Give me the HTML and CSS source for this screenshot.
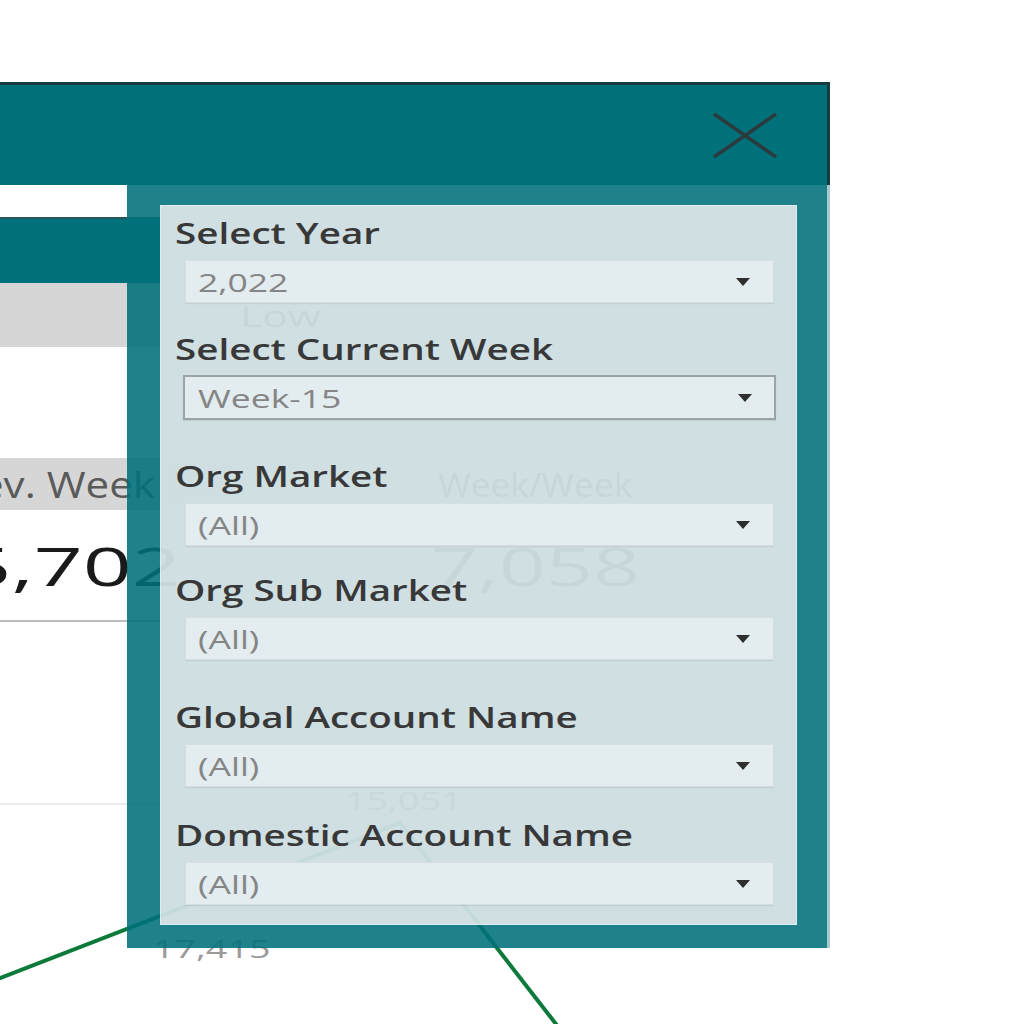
FILE: index.html
```html
<!DOCTYPE html>
<html lang="en">
<head>
<meta charset="utf-8">
<title>Filters</title>
<link rel="stylesheet" href="styles.css">
</head>
<body>
<div class="dash">
  <div class="dash-top"></div>
  <div class="dash-strip"></div>
  <div class="dash-band"></div>
  <div class="dash-row">
    <div class="dash-grey"></div>
    <span class="sx low">Low</span>
  </div>
  <div class="dash-gap1"></div>
  <div class="kpi">
    <div class="kpi-card kpi-a">
      <div class="kpi-head"><span class="sx sx-r head-a">Prev. Week</span></div>
      <div class="kpi-val"><span class="sx sx-r num">5,702</span></div>
    </div>
    <div class="kpi-card kpi-b">
      <div class="kpi-head kpi-head-c"><span class="sx sx-c head-b">Week/Week</span></div>
      <div class="kpi-val kpi-val-c"><span class="sx sx-c num num-b">7,058</span></div>
    </div>
  </div>
  <div class="dash-gap2"></div>
  <div class="chart">
    <svg class="chart-svg" width="1024" height="219" viewBox="0 0 1024 219">
      <polyline points="-10,177 400,18 580,250" fill="none" stroke="#0c7a3b" stroke-width="4"/>
      <text class="chart-label chart-label-hidden" transform="translate(345,5) scale(1.45,1)">15,051</text>
      <text class="chart-label" transform="translate(153,153) scale(1.45,1)">17,415</text>
    </svg>
  </div>
</div>

<div class="popup">
  <div class="popup-head">
    <svg class="close-icon" width="66" height="47" viewBox="0 0 66 47">
      <path d="M2 2 L64 45 M2 45 L64 2" stroke="#2b3a3c" stroke-width="3.5" fill="none"/>
    </svg>
  </div>
  <div class="popup-frame">
    <div class="panel">
      <div class="filter">
        <div class="filter-label"><span class="sx sx-l">Select Year</span></div>
        <div class="dropdown"><span class="sx value">2,022</span><span class="caret"></span></div>
      </div>
      <div class="filter">
        <div class="filter-label"><span class="sx sx-l">Select Current Week</span></div>
        <div class="dropdown dropdown-active"><span class="sx value">Week-15</span><span class="caret"></span></div>
      </div>
      <div class="filter">
        <div class="filter-label"><span class="sx sx-l">Org Market</span></div>
        <div class="dropdown"><span class="sx value">(All)</span><span class="caret"></span></div>
      </div>
      <div class="filter">
        <div class="filter-label"><span class="sx sx-l">Org Sub Market</span></div>
        <div class="dropdown"><span class="sx value">(All)</span><span class="caret"></span></div>
      </div>
      <div class="filter">
        <div class="filter-label"><span class="sx sx-l">Global Account Name</span></div>
        <div class="dropdown"><span class="sx value">(All)</span><span class="caret"></span></div>
      </div>
      <div class="filter">
        <div class="filter-label"><span class="sx sx-l">Domestic Account Name</span></div>
        <div class="dropdown"><span class="sx value">(All)</span><span class="caret"></span></div>
      </div>
    </div>
  </div>
</div>
</body>
</html>
```

FILE: styles.css
```css
html, body {
  margin: 0;
  padding: 0;
}
body {
  width: 1024px;
  height: 1024px;
  overflow: hidden;
  background: #ffffff;
  position: relative;
  font-family: "Open Sans", "Noto Sans", "DejaVu Sans", sans-serif;
}

/* horizontally stretched text, as in the reference */
.sx {
  display: inline-block;
  white-space: nowrap;
  transform: scaleX(var(--sx, 1.42));
  transform-origin: 0 50%;
}
.sx-r { transform-origin: 100% 50%; }
.sx-c { transform-origin: 50% 50%; }
.sx-l { --sx: 1.33; }

/* ---------- dashboard behind the popup ---------- */
.dash-top { height: 185px; }
.dash-strip { height: 32px; }
.dash-band {
  width: 160px;
  height: 64px;
  background: #00717b;
  border-top: 2px solid #24565b;
}
.dash-row {
  display: flex;
  align-items: center;
  height: 64px;
}
.dash-grey {
  width: 160px;
  height: 64px;
  background: #d6d6d6;
  margin-right: 80px;
}
.low {
  font-size: 30px;
  color: #2a2a2a;
}
.dash-gap1 { height: 111px; }

.kpi {
  display: flex;
  width: 740px;
  height: 162px;
  border-bottom: 2px solid #bdbdbd;
}
.kpi-card {
  display: flex;
  flex-direction: column;
}
.kpi-a { width: 235px; }
.kpi-b { width: 410px; margin-left: 95px; }
.kpi-head {
  height: 52px;
  background: #d6d6d6;
  display: flex;
  align-items: center;
  justify-content: flex-end;
  padding-right: 80px;
  font-size: 36px;
}
.head-a { --sx: 1.17; color: #5a5a5a; }
.head-b { --sx: 1.1; font-size: 32px; color: #2a2a2a; }
.kpi-head-c { justify-content: center; padding-right: 0; background: transparent; }
.kpi-val {
  flex: 1;
  display: flex;
  align-items: center;
  justify-content: flex-end;
  padding-right: 54px;
}
.kpi-val-c { justify-content: center; padding-right: 0; }
.num {
  --sx: 1.62;
  font-size: 53px;
  color: #1a1a1a;
}
.num-b { --sx: 1.55; color: #222222; }
.dash-gap2 { height: 181px; }

.chart {
  width: 720px;
  height: 219px;
  border-top: 2px solid #ececec;
}
.chart-svg {
  display: block;
  overflow: visible;
}
.chart-label {
  font-family: "Open Sans", "Noto Sans", sans-serif;
  font-size: 26px;
  fill: #9a9a9a;
}
.chart-label-hidden { fill: #555555; }

/* ---------- filter popup ---------- */
.popup {
  position: absolute;
  left: 0;
  top: 82px;
  width: 830px;
}
.popup-head {
  box-sizing: border-box;
  height: 103px;
  background: #00717b;
  border-top: 3px solid #163c40;
  border-right: 3px solid #163c40;
  display: flex;
  justify-content: flex-end;
  align-items: center;
  padding-right: 49px;
}
.close-icon { display: block; }

.popup-frame {
  box-sizing: border-box;
  width: 700px;
  margin-left: 127px;
  border-style: solid;
  border-color: rgba(0, 112, 122, 0.88);
  border-width: 20px 30px 23px 33px;
  box-shadow: 3px 0 0 rgba(150, 192, 200, 0.85);
}
.panel {
  box-sizing: border-box;
  height: 720px;
  background: rgba(205, 222, 225, 0.96);
  border: 1px solid rgba(225, 240, 242, 0.8);
  padding: 12px 0 19px;
  display: grid;
  grid-template-rows: 116px 127px 114px 127px 118px auto;
}
.filter {
  display: flex;
  flex-direction: column;
}
.filter-label {
  font-size: 29px;
  line-height: 29px;
  font-weight: 600;
  color: #383838;
  margin: 0 0 13px 14px;
}
.dropdown {
  box-sizing: border-box;
  height: 43px;
  margin: 0 22px 0 24px;
  background: #e3ecee;
  border: 1px solid #d4dfe1;
  box-shadow: 0 1px 1px rgba(0, 0, 0, 0.07);
  display: flex;
  align-items: center;
  justify-content: space-between;
  padding: 0 23px 0 12px;
}
.dropdown-active {
  height: 45px;
  margin: -1px 20px 0 22px;
  border: 2px solid #9ba3a4;
  padding: 0 22px 0 13px;
}
.value {
  font-size: 25px;
  color: #858585;
}
.caret {
  width: 0;
  height: 0;
  border-left: 7px solid transparent;
  border-right: 7px solid transparent;
  border-top: 8px solid #2e2e2e;
}
```
